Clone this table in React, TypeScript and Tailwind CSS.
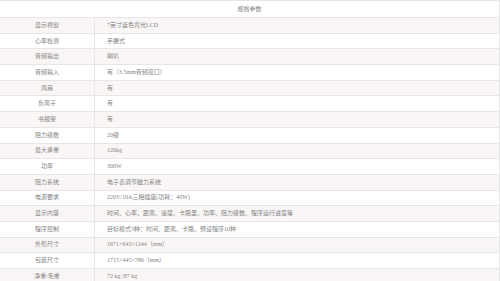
import React from "react";

const rows: [string, string][] = [
  ["显示视窗", "7英寸蓝色背光LCD"],
  ["心率检测", "手握式"],
  ["音频输出", "喇叭"],
  ["音频输入", "有（3.5mm音频接口）"],
  ["风扇", "有"],
  ["负离子", "有"],
  ["书报架", "有"],
  ["阻力级数", "20级"],
  ["最大承重", "120kg"],
  ["功率", "300W"],
  ["阻力系统", "电子表调节磁力系统"],
  ["电源要求", "220V/10A三相插座(功耗：40W)"],
  ["显示内容", "时间、心率、距离、速度、卡路里、功率、阻力级数、程序运行进度等"],
  ["程序控制", "目标模式3种：时间、距离、卡路、预设程序10种"],
  ["外形尺寸", "1671×643×1244（mm）"],
  ["包装尺寸", "1715×445×780（mm）"],
  ["净重/毛重", "72 kg /87 kg"],
];

export default function App() {
  return (
    <div
      className="w-[500px] h-[281px] overflow-hidden bg-white text-[6px] text-[#858585]"
      style={{ fontFamily: '"Liberation Serif", "Noto Sans CJK SC", serif' }}
    >
      <div className="border-t border-r border-[#e6e6e6]">
        <div className="h-[17px] flex items-center justify-center border-b border-[#e6e6e6]">
          规格参数
        </div>
        {rows.map(([k, v], i) => (
          <div
            key={k}
            className={
              "h-[15.7px] flex border-b border-[#e6e6e6] " +
              (i % 2 === 0 ? "bg-[#f9f6f5]" : "bg-white")
            }
          >
            <div className="w-[95px] shrink-0 flex items-center justify-center border-r border-[#e6e6e6]">
              {k}
            </div>
            <div className="flex-1 flex items-center pl-[12px] whitespace-nowrap">{v}</div>
          </div>
        ))}
      </div>
    </div>
  );
}
